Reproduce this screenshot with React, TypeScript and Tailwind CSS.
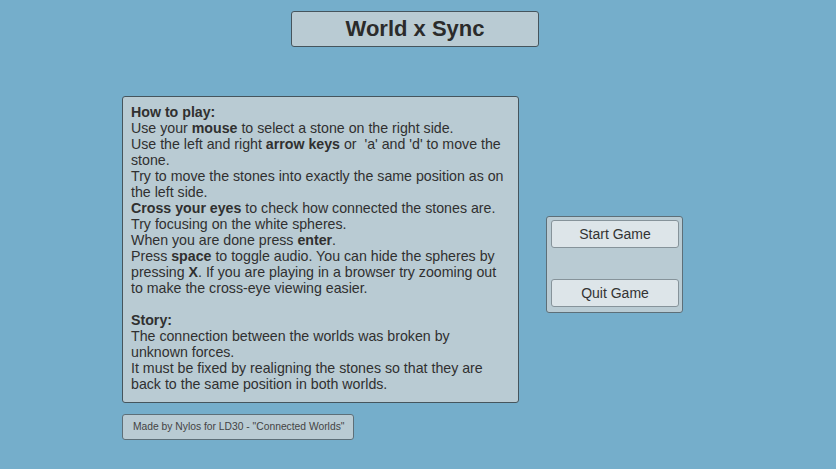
import React from "react";

const font = { fontFamily: '"Liberation Sans", Arial, sans-serif' };

const Menu = () => {
  return (
    <div
      className="w-[836px] h-[469px] bg-[#75aecb] text-[#303030] overflow-hidden"
      style={font}
    >
      {/* Title */}
      <div className="pt-[11px] pl-[291px]">
        <div className="w-[248px] h-[36px] flex items-center justify-center bg-[#b9cbd3] border border-[#45555d] rounded-[3px]">
          <h1 className="text-[22px] font-bold text-[#2b2b2b] leading-none">World x Sync</h1>
        </div>
      </div>

      <div className="flex items-start pl-[122px] mt-[49px] gap-[27px]">
        <div className="flex flex-col gap-[11px]">
          {/* Instructions */}
          <div className="w-[397px] h-[307px] bg-[#b9cbd3] border border-[#45555d] rounded-[3px] pt-[7px] pl-[8px] pr-[10px] text-[14.2px] leading-[16px]">
            <p className="font-bold">How to play:</p>
            <p>
              Use your <b>mouse</b> to select a stone on the right side.
            </p>
            <p>
              Use the left and right <b>arrow keys</b> or&nbsp; 'a' and 'd' to move the stone.
            </p>
            <p>Try to move the stones into exactly the same position as on the left side.</p>
            <p>
              <b>Cross your eyes</b> to check how connected the stones are.
            </p>
            <p>Try focusing on the white spheres.</p>
            <p>
              When you are done press <b>enter</b>.
            </p>
            <p>
              Press <b>space</b> to toggle audio. You can hide the spheres by pressing <b>X</b>. If
              you are playing in a browser try zooming out to make the cross-eye viewing easier.
            </p>
            <p className="font-bold mt-[16px]">Story:</p>
            <p>The connection between the worlds was broken by unknown forces.</p>
            <p>It must be fixed by realigning the stones so that they are back to the same position in both worlds.</p>
          </div>

          {/* Credits */}
          <div className="w-[232px] h-[26px] flex items-center pl-[10px] bg-[#b9cbd3] border border-[#5d6f78] rounded-[3px] text-[10.3px] text-[#444]">
            Made by Nylos for LD30 - "Connected Worlds"
          </div>
        </div>

        {/* Menu buttons */}
        <div className="mt-[120px] w-[137px] h-[97px] flex flex-col justify-between pt-[3px] pb-[5px] pl-[4px] pr-[3px] bg-[#b9cbd3] border border-[#5d6f78] rounded-[3px]">
          <button className="w-[128px] h-[28px] bg-[#dde5e9] border border-[#86939a] rounded-[3px] text-[14px] text-[#333]">
            Start Game
          </button>
          <button className="w-[128px] h-[28px] bg-[#dde5e9] border border-[#86939a] rounded-[3px] text-[14px] text-[#333]">
            Quit Game
          </button>
        </div>
      </div>
    </div>
  );
};

export default function App() {
  return <Menu />;
}
